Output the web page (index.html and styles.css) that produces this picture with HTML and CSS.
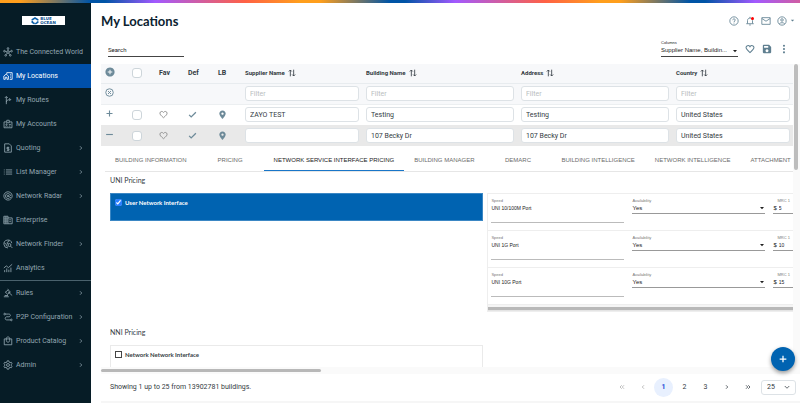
FILE: index.html
```html
<!DOCTYPE html>
<html lang="en">
<head>
    <meta charset="UTF-8">
    <meta name="viewport" content="width=device-width, initial-scale=1.0">
    <title>My Locations</title>
    <link rel="stylesheet" href="styles.css">
</head>
<body>

<!-- icons -->
<svg class="sprite" xmlns="http://www.w3.org/2000/svg">
    <symbol id="i-hub" viewBox="0 0 24 24"><g fill="none" stroke="currentColor" stroke-width="2"><circle cx="12" cy="12" r="3"/><circle cx="12" cy="3.500" r="2"/><circle cx="3.500" cy="10" r="2"/><circle cx="20.500" cy="10" r="2"/><circle cx="6.500" cy="20" r="2"/><circle cx="17.500" cy="20" r="2"/><path d="M12 5.500V9M5.500 10.500l3.500 1M18.500 10.500l-3.500 1M8 18l2.300-3.500M16 18l-2.300-3.500"/></g></symbol>
    <symbol id="i-home" viewBox="0 0 24 24"><g fill="none" stroke="currentColor" stroke-width="2"><path d="M2 20V12l5.500-4.500L13 12v8H9.500v-5h-4v5z"/><path d="M9 7V4h13v16h-6"/><path d="M17 8h2M17 12h2M17 16h2"/></g></symbol>
    <symbol id="i-route" viewBox="0 0 24 24"><path fill="none" stroke="currentColor" stroke-width="2" d="M8 22V4M4.500 7L8 3.500 11.500 7M8 17c0-4 3-6 10-6M15 7.500l3.500 3.500-3.500 3.500"/></symbol>
    <symbol id="i-badge" viewBox="0 0 24 24"><g fill="none" stroke="currentColor" stroke-width="2"><path d="M9 7H2.500v14h19V7H15"/><path d="M9 3h6v6H9z"/><circle cx="8.500" cy="13" r="1.500"/><path d="M5.500 18c0-2 6-2 6 0M14 13h5M14 17h4"/></g></symbol>
    <symbol id="i-quote" viewBox="0 0 24 24"><g fill="none" stroke="currentColor" stroke-width="2"><path d="M4 2h11l5 5v15H4z"/><path d="M15 10.500H9.500v3.500h5v3.500H9M12 9v10"/></g></symbol>
    <symbol id="i-list" viewBox="0 0 24 24"><path fill="none" stroke="currentColor" stroke-width="2" d="M2 7h2M2 12h2M2 17h2M7 7h15M7 12h15M7 17h15"/></symbol>
    <symbol id="i-radar" viewBox="0 0 24 24"><g fill="none" stroke="currentColor" stroke-width="2"><path d="M19 19A10 10 0 1 1 22 12c0 2-.8 4-2 5.500L13 12"/><path d="M15.500 17A6 6 0 1 1 18 12"/><circle cx="12" cy="12" r="2"/></g></symbol>
    <symbol id="i-building" viewBox="0 0 24 24"><path fill="none" stroke="currentColor" stroke-width="2" d="M2 3h10v18H2zM12 7h10v14H12M2 7.500h10M2 12h10M2 16.500h10M7 3v18M15 11.500h4M15 16h4"/></symbol>
    <symbol id="i-finder" viewBox="0 0 24 24"><g fill="none" stroke="currentColor" stroke-width="2"><path d="M21 10A9.500 9.500 0 1 0 12 21.500"/><path d="M3 9l5 4v3l3 2M14 3v3l-4 2v3h3"/><circle cx="15.500" cy="14.500" r="3.500"/><path d="M18 17l4.500 4.500"/></g></symbol>
    <symbol id="i-chart" viewBox="0 0 24 24"><path fill="none" stroke="currentColor" stroke-width="2" d="M4 22v-5M9 22v-9M14 22v-6M19 22V11M2 12l6-5 5 4 9-8"/></symbol>
    <symbol id="i-gavel" viewBox="0 0 24 24"><path fill="none" stroke="currentColor" stroke-width="2" d="M2 21h12M4 18h8M11 3l7 7M5 9l7 7M13 4L6 10M17 9l-5 6M12 9l10 9"/></symbol>
    <symbol id="i-path" viewBox="0 0 24 24"><g fill="none" stroke="currentColor" stroke-width="2"><circle cx="4" cy="5" r="2"/><circle cx="20" cy="19" r="2"/><path d="M6 5h8c5 0 5 6 0 6.500H9c-5 .5-5 7.500 0 7.500h9"/></g></symbol>
    <symbol id="i-bag" viewBox="0 0 24 24"><path fill="none" stroke="currentColor" stroke-width="2" d="M3 7h18v14H3zM8 11V6c0-5 8-5 8 0v5M8 11c0 5 8 5 8 0"/></symbol>
    <symbol id="i-gear" viewBox="0 0 24 24"><g fill="none" stroke="currentColor" stroke-width="2"><path d="M10 2h4l.6 3 2.400 1.400 2.900-1 2 3.400-2.300 2v2.400l2.300 2-2 3.400-2.900-1L14.600 19l-.6 3h-4l-.6-3L7 17.600l-2.900 1-2-3.400 2.300-2v-2.400l-2.300-2 2-3.400 2.900 1L9.400 5z"/><circle cx="12" cy="12" r="3.500"/></g></symbol>
    <symbol id="i-right" viewBox="0 0 24 24"><path fill="none" stroke="currentColor" stroke-width="3" d="M8 5l7 7-7 7"/></symbol>
    <symbol id="i-left" viewBox="0 0 24 24"><path fill="none" stroke="currentColor" stroke-width="3" d="M16 5l-7 7 7 7"/></symbol>
    <symbol id="i-right2" viewBox="0 0 24 24"><path fill="none" stroke="currentColor" stroke-width="3" d="M4 5l7 7-7 7M13 5l7 7-7 7"/></symbol>
    <symbol id="i-left2" viewBox="0 0 24 24"><path fill="none" stroke="currentColor" stroke-width="3" d="M11 5l-7 7 7 7M20 5l-7 7 7 7"/></symbol>
    <symbol id="i-help" viewBox="0 0 24 24"><g fill="none" stroke="currentColor" stroke-width="2"><circle cx="12" cy="12" r="10"/><path d="M9 10c0-4 6-4 6-.5 0 2.500-3 2.500-3 5M12 16v2"/></g></symbol>
    <symbol id="i-bell" viewBox="0 0 24 24"><path fill="none" stroke="currentColor" stroke-width="2" d="M3 18.500h18M6 18V11c0-8 12-8 12 0v7M12 5V2M10 21.500h4"/></symbol>
    <symbol id="i-mail" viewBox="0 0 24 24"><path fill="none" stroke="currentColor" stroke-width="2" d="M2 4h20v16H2zM2 6l10 6.500L22 6"/></symbol>
    <symbol id="i-user" viewBox="0 0 24 24"><g fill="none" stroke="currentColor" stroke-width="2"><circle cx="12" cy="12" r="10"/><circle cx="12" cy="9.500" r="3"/><path d="M5.500 19c3-4 10-4 13 0"/></g></symbol>
    <symbol id="i-caret" viewBox="0 0 24 24"><path fill="currentColor" d="M4 8h16l-8 9z"/></symbol>
    <symbol id="i-heart" viewBox="0 0 24 24"><path fill="none" stroke="currentColor" stroke-width="2.500" d="M12 20.500C5 14.500 2.500 12 2.500 8.500c0-5 6.500-6.500 9.500-2 3-4.500 9.500-3 9.500 2 0 3.500-2.500 6-9.500 12z"/></symbol>
    <symbol id="i-save" viewBox="0 0 24 24"><path fill="currentColor" fill-rule="evenodd" d="M4 2h13l5 5v13a2 2 0 0 1-2 2H4a2 2 0 0 1-2-2V4a2 2 0 0 1 2-2zM5 5v4h10V5zM12 12.500a3.500 3.500 0 1 0 .01 0z"/></symbol>
    <symbol id="i-dots" viewBox="0 0 24 24"><g fill="currentColor"><circle cx="12" cy="4" r="2.500"/><circle cx="12" cy="12" r="2.500"/><circle cx="12" cy="20" r="2.500"/></g></symbol>
    <symbol id="i-addcircle" viewBox="0 0 24 24"><path fill="currentColor" fill-rule="evenodd" d="M12 1a11 11 0 1 0 .01 0zM10.800 6.500h2.400v4.300h4.300v2.400h-4.300v4.300h-2.400v-4.300H6.500v-2.400h4.300z"/></symbol>
    <symbol id="i-clear" viewBox="0 0 24 24"><g fill="none" stroke="currentColor" stroke-width="2.500"><circle cx="12" cy="12" r="10"/><path d="M8 8l8 8M16 8l-8 8"/></g></symbol>
    <symbol id="i-plus" viewBox="0 0 24 24"><path fill="none" stroke="currentColor" stroke-width="3" d="M12 4v16M4 12h16"/></symbol>
    <symbol id="i-minus" viewBox="0 0 24 24"><path fill="none" stroke="currentColor" stroke-width="3" d="M3 12h18"/></symbol>
    <symbol id="i-check" viewBox="0 0 24 24"><path fill="none" stroke="currentColor" stroke-width="3.500" d="M3 13l5.500 5.500L21 6"/></symbol>
    <symbol id="i-pin" viewBox="0 0 24 24"><path fill="currentColor" fill-rule="evenodd" d="M12 1c-5 0-8.500 3.700-8.500 8.500C3.500 15 12 24 12 24s8.500-9 8.500-14.500C20.500 4.700 17 1 12 1zm0 5.500a3 3 0 1 1-.01 0z"/></symbol>
    <symbol id="i-sort" viewBox="0 0 24 24"><path fill="none" stroke="currentColor" stroke-width="2.500" d="M7 22V3M2.500 7.500L7 3l4.500 4.500M17 2v19M12.500 16.500L17 21l4.500-4.500"/></symbol>
    <symbol id="i-down" viewBox="0 0 24 24"><path fill="none" stroke="currentColor" stroke-width="3" d="M3 8l9 9 9-9"/></symbol>
</svg>

<div class="rainbow"></div>

<div class="app">
    <aside class="sidebar">
        <div class="logo">
            <svg viewBox="0 0 24 24"><path fill="none" stroke="#0a5ea8" stroke-width="5" stroke-dasharray="12 2" d="M12 3l8 5v8l-8 5-8-5V8z"/></svg>
            <span>BLUE<br>OCEAN</span>
        </div>
        <nav>
            <a href="#"><svg><use href="#i-hub"/></svg>The Connected World</a>
            <a href="#" class="active"><svg><use href="#i-home"/></svg>My Locations</a>
            <a href="#"><svg><use href="#i-route"/></svg>My Routes</a>
            <a href="#"><svg><use href="#i-badge"/></svg>My Accounts</a>
            <a href="#"><svg><use href="#i-quote"/></svg>Quoting<svg class="more"><use href="#i-right"/></svg></a>
            <a href="#"><svg><use href="#i-list"/></svg>List Manager<svg class="more"><use href="#i-right"/></svg></a>
            <a href="#"><svg><use href="#i-radar"/></svg>Network Radar<svg class="more"><use href="#i-right"/></svg></a>
            <a href="#"><svg><use href="#i-building"/></svg>Enterprise</a>
            <a href="#"><svg><use href="#i-finder"/></svg>Network Finder<svg class="more"><use href="#i-right"/></svg></a>
            <a href="#"><svg><use href="#i-chart"/></svg>Analytics</a>
            <hr>
            <a href="#"><svg><use href="#i-gavel"/></svg>Rules<svg class="more"><use href="#i-right"/></svg></a>
            <a href="#"><svg><use href="#i-path"/></svg>P2P Configuration<svg class="more"><use href="#i-right"/></svg></a>
            <a href="#"><svg><use href="#i-bag"/></svg>Product Catalog<svg class="more"><use href="#i-right"/></svg></a>
            <a href="#"><svg><use href="#i-gear"/></svg>Admin<svg class="more"><use href="#i-right"/></svg></a>
        </nav>
    </aside>

    <main>
        <header>
            <h1>My Locations</h1>
            <div class="header-icons">
                <button aria-label="Help"><svg><use href="#i-help"/></svg></button>
                <button aria-label="Notifications" class="bell"><svg><use href="#i-bell"/></svg></button>
                <button aria-label="Messages"><svg><use href="#i-mail"/></svg></button>
                <button aria-label="Account" class="account"><svg><use href="#i-user"/></svg><svg class="caret"><use href="#i-caret"/></svg></button>
            </div>
        </header>

        <div class="toolbar">
            <input type="text" class="search" placeholder="Search" aria-label="Search">
            <div class="toolbar-right">
                <div class="columns">
                    <label for="columns">Columns</label>
                    <div class="select-wrap">
                        <select id="columns"><option>Supplier Name, Buildin...</option></select>
                        <svg><use href="#i-caret"/></svg>
                    </div>
                </div>
                <button aria-label="Favorites"><svg><use href="#i-heart"/></svg></button>
                <button aria-label="Save"><svg><use href="#i-save"/></svg></button>
                <button aria-label="More"><svg><use href="#i-dots"/></svg></button>
            </div>
        </div>

        <div class="grid-area">
            <div class="grid-body">
                <table>
                    <colgroup>
                        <col class="c-icon"><col class="c-icon"><col class="c-fav"><col class="c-def"><col class="c-icon"><col class="c-side"><col><col><col class="c-side">
                    </colgroup>
                    <thead>
                        <tr>
                            <th><button aria-label="Expand all"><svg><use href="#i-addcircle"/></svg></button></th>
                            <th><input type="checkbox" aria-label="Select all"></th>
                            <th>Fav</th>
                            <th>Def</th>
                            <th>LB</th>
                            <th class="sortable">Supplier Name<svg><use href="#i-sort"/></svg></th>
                            <th class="sortable">Building Name<svg><use href="#i-sort"/></svg></th>
                            <th class="sortable">Address<svg><use href="#i-sort"/></svg></th>
                            <th class="sortable">Country<svg><use href="#i-sort"/></svg></th>
                        </tr>
                        <tr class="filters">
                            <td><button aria-label="Clear filters"><svg><use href="#i-clear"/></svg></button></td>
                            <td></td>
                            <td></td>
                            <td></td>
                            <td></td>
                            <td><input type="text" placeholder="Filter" aria-label="Filter supplier name"></td>
                            <td><input type="text" placeholder="Filter" aria-label="Filter building name"></td>
                            <td><input type="text" placeholder="Filter" aria-label="Filter address"></td>
                            <td><input type="text" placeholder="Filter" aria-label="Filter country"></td>
                        </tr>
                    </thead>
                    <tbody>
                        <tr>
                            <td><button aria-label="Expand"><svg><use href="#i-plus"/></svg></button></td>
                            <td><input type="checkbox" aria-label="Select row"></td>
                            <td><svg class="fav"><use href="#i-heart"/></svg></td>
                            <td><svg><use href="#i-check"/></svg></td>
                            <td><svg><use href="#i-pin"/></svg></td>
                            <td><input type="text" value="ZAYO TEST" aria-label="Supplier name"></td>
                            <td><input type="text" value="Testing" aria-label="Building name"></td>
                            <td><input type="text" value="Testing" aria-label="Address"></td>
                            <td><input type="text" value="United States" aria-label="Country"></td>
                        </tr>
                        <tr class="open">
                            <td><button aria-label="Collapse"><svg><use href="#i-minus"/></svg></button></td>
                            <td><input type="checkbox" aria-label="Select row"></td>
                            <td><svg class="fav"><use href="#i-heart"/></svg></td>
                            <td><svg><use href="#i-check"/></svg></td>
                            <td><svg><use href="#i-pin"/></svg></td>
                            <td><input type="text" value="" aria-label="Supplier name"></td>
                            <td><input type="text" value="107 Becky Dr" aria-label="Building name"></td>
                            <td><input type="text" value="107 Becky Dr" aria-label="Address"></td>
                            <td><input type="text" value="United States" aria-label="Country"></td>
                        </tr>
                    </tbody>
                </table>

                <section class="detail">
                    <div class="tabs">
                        <button>BUILDING INFORMATION</button>
                        <button>PRICING</button>
                        <button class="active">NETWORK SERVICE INTERFACE PRICING</button>
                        <button>BUILDING MANAGER</button>
                        <button>DEMARC</button>
                        <button>BUILDING INTELLIGENCE</button>
                        <button>NETWORK INTELLIGENCE</button>
                        <button>ATTACHMENT</button>
                    </div>

                    <h2>UNI Pricing</h2>
                    <div class="pricing uni">
                        <label class="interface selected"><input type="checkbox" checked>User Network Interface</label>
                        <div class="ports">
                            <div class="port">
                                <div class="field speed"><label for="speed1">Speed</label><input type="text" id="speed1" value="UNI 10/100M Port"></div>
                                <div class="field"><label for="av1">Availability</label><div class="select-wrap"><select id="av1"><option>Yes</option></select><svg><use href="#i-caret"/></svg></div></div>
                                <div class="field mrc"><label for="mrc1">MRC 1</label><div class="money">$<input type="text" id="mrc1" value="5"></div></div>
                            </div>
                            <div class="port">
                                <div class="field speed"><label for="speed2">Speed</label><input type="text" id="speed2" value="UNI 1G Port"></div>
                                <div class="field"><label for="av2">Availability</label><div class="select-wrap"><select id="av2"><option>Yes</option></select><svg><use href="#i-caret"/></svg></div></div>
                                <div class="field mrc"><label for="mrc2">MRC 1</label><div class="money">$<input type="text" id="mrc2" value="10"></div></div>
                            </div>
                            <div class="port">
                                <div class="field speed"><label for="speed3">Speed</label><input type="text" id="speed3" value="UNI 10G Port"></div>
                                <div class="field"><label for="av3">Availability</label><div class="select-wrap"><select id="av3"><option>Yes</option></select><svg><use href="#i-caret"/></svg></div></div>
                                <div class="field mrc"><label for="mrc3">MRC 1</label><div class="money">$<input type="text" id="mrc3" value="15"></div></div>
                            </div>
                            <div class="ports-scroll"></div>
                        </div>
                    </div>

                    <h2>NNI Pricing</h2>
                    <div class="pricing">
                        <label class="interface"><input type="checkbox">Network Network Interface</label>
                    </div>
                </section>
            </div>
            <div class="scroll-y"></div>
            <button class="fab" aria-label="Add location"><svg><use href="#i-plus"/></svg></button>
        </div>
        <div class="scroll-x"></div>

        <footer>
            <span>Showing 1 up to 25 from 13902781 buildings.</span>
            <div class="pager">
                <button aria-label="First page" disabled><svg><use href="#i-left2"/></svg></button>
                <button aria-label="Previous page" disabled><svg><use href="#i-left"/></svg></button>
                <button class="current">1</button>
                <button>2</button>
                <button>3</button>
                <button aria-label="Next page"><svg><use href="#i-right"/></svg></button>
                <button aria-label="Last page"><svg><use href="#i-right2"/></svg></button>
                <div class="select-wrap page-size">
                    <select aria-label="Rows per page"><option>25</option></select>
                    <svg><use href="#i-down"/></svg>
                </div>
            </div>
        </footer>
    </main>
</div>

</body>
</html>
```

FILE: styles.css
```css
* {
    box-sizing: border-box;
}
body {
    margin: 0;
    height: 100vh;
    display: flex;
    flex-direction: column;
    font-family: Roboto, "Liberation Sans", sans-serif;
    font-size: 7px;
    color: #333b42;
    background-color: #fff;
    overflow: hidden;
}
button, input, select {
    font: inherit;
    color: inherit;
    margin: 0;
    padding: 0;
    border: none;
    background: none;
    outline: none;
}
button {
    cursor: pointer;
}
select {
    appearance: none;
    width: 100%;
}
svg {
    display: block;
    flex: none;
    width: 10px;
    height: 10px;
}
.sprite {
    position: absolute;
    width: 0;
    height: 0;
}
.rainbow {
    height: 3px;
    flex: none;
    background: repeating-linear-gradient(90deg, #ff9f1c 0, #ff9f1c 20px, #0054a6 90px, #0054a6 105px, #a259ff 155px, #ff6145 245px, #ff9f1c 300px);
}
.app {
    flex: 1;
    display: flex;
    min-height: 0;
}

/* sidebar */
.sidebar {
    width: 91px;
    flex: none;
    background-color: #061c26;
    color: #93a7b1;
}
.logo {
    display: flex;
    align-items: center;
    justify-content: center;
    gap: 1px;
    width: 43px;
    height: 9px;
    margin: 13px 0 15px 22px;
    background-color: #fff;
    color: #0a4f8f;
    font: bold 4px/4px "DejaVu Sans", sans-serif;
}
.logo svg {
    width: 8px;
    height: 8px;
}
.sidebar a {
    display: flex;
    align-items: center;
    gap: 3px;
    height: 24px;
    padding: 0 7px 0 3px;
    color: inherit;
    text-decoration: none;
    white-space: nowrap;
}
.sidebar a.active {
    background-color: #0050ab;
    color: #fff;
}
.sidebar .more {
    width: 6px;
    height: 6px;
    margin-left: auto;
}
.sidebar hr {
    margin: 0;
    border: none;
    border-top: 1px solid #4a626d;
}

/* header */
main {
    flex: 1;
    min-width: 0;
    display: flex;
    flex-direction: column;
}
header {
    display: flex;
    align-items: center;
    justify-content: space-between;
    height: 35px;
    padding: 0 5px 0 10px;
}
h1 {
    margin: 0;
    font: bold 13px/20px Lato, sans-serif;
    color: #0b2230;
}
.header-icons, .toolbar-right {
    display: flex;
    align-items: center;
    gap: 6px;
    color: #5f7f90;
}
.toolbar button {
    color: #5f7f90;
}
.account {
    display: flex;
    align-items: center;
    gap: 3px;
}
.caret {
    width: 5px;
    height: 5px;
}
.bell {
    position: relative;
}
.bell::after {
    content: "";
    position: absolute;
    top: 1px;
    right: 1px;
    width: 3px;
    height: 3px;
    border-radius: 50%;
    background-color: #f00;
}

/* search and column picker */
.toolbar {
    display: flex;
    justify-content: space-between;
    align-items: flex-end;
    height: 26px;
    padding: 0 11px 7px 17px;
}
.search {
    width: 76px;
    height: 13px;
    padding-bottom: 1px;
    font-size: 6px;
    border-bottom: 1px solid #444;
}
.search::placeholder {
    color: #222;
}
.toolbar-right {
    gap: 7px;
}
.columns {
    width: 77px;
    color: #222;
    border-bottom: 1px solid #444;
}
.columns label, .field label {
    display: block;
    font: 4px/5px "Liberation Sans", sans-serif;
}
.select-wrap {
    display: flex;
    align-items: center;
}
.select-wrap svg {
    width: 6px;
    height: 6px;
}
.columns select {
    height: 11px;
    padding-bottom: 1px;
    font-family: "Liberation Sans", sans-serif;
    font-size: 6px;
}

/* grid */
.grid-area {
    flex: 1;
    min-height: 0;
    display: flex;
    position: relative;
    padding-left: 10px;
}
.grid-body {
    flex: 1;
    min-width: 0;
    overflow: hidden;
}
.scroll-y {
    width: 7px;
    padding: 0 2px 0 1px;
    background-color: #fafafa;
}
.scroll-y::before {
    content: "";
    display: block;
    height: 35%;
    border-radius: 2px;
    background-color: #bdbdbd;
}
.scroll-x {
    flex: none;
    height: 7px;
    margin-left: 10px;
    padding: 2px 0;
    background-color: #fafafa;
}
.scroll-x::before {
    content: "";
    display: block;
    width: 220px;
    height: 3px;
    border-radius: 2px;
    background-color: #b8b8b8;
}
table {
    width: 100%;
    table-layout: fixed;
    border-collapse: collapse;
}
.c-icon {
    width: 27px;
}
.c-fav {
    width: 29px;
}
.c-def {
    width: 30px;
}
.c-side {
    width: 121px;
}
th, td {
    height: 21px;
    padding: 0 3px 0 4px;
    text-align: left;
    vertical-align: middle;
}
th {
    height: 19px;
    font-weight: bold;
    border-bottom: 1px solid #e8ecef;
}
thead {
    background-color: #f7f8fa;
}
.filters {
    border-bottom: 1px solid #eceff1;
}
th button svg, td svg, td button svg {
    color: #6d8a99;
}
td svg {
    width: 9px;
    height: 9px;
}
td .fav {
    color: #909090;
}
.open {
    background-color: #e9e9e9;
}
.sortable {
    font-size: 6px;
    white-space: nowrap;
}
.sortable svg {
    display: inline-block;
    width: 8px;
    height: 8px;
    margin-left: 3px;
    vertical-align: middle;
}
td input[type="text"] {
    display: block;
    width: 100%;
    height: 15px;
    padding: 0 4px;
    border: 1px solid #dde2e6;
    border-radius: 3px;
    background-color: #fff;
}
td input::placeholder {
    color: #b9bdc0;
}
th input[type="checkbox"], td input[type="checkbox"] {
    appearance: none;
    display: block;
    width: 10px;
    height: 10px;
    border: 1px solid #cdd5da;
    border-radius: 3px;
    background-color: #fff;
}

/* row detail */
.tabs {
    display: flex;
    margin-left: 4px;
    border-bottom: 1px solid #e6e6e6;
}
.tabs button {
    flex: none;
    min-width: 67px;
    height: 25px;
    padding: 3px 10px 0;
    font: 6px/8px "Liberation Sans", sans-serif;
    color: #6b6b6b;
    border-bottom: 1px solid transparent;
}
.tabs button:last-child {
    min-width: 0;
}
.tabs .active {
    color: #222;
    border-bottom-color: #1976c8;
}
h2 {
    margin: 0 0 0 9px;
    padding: 3px 0 8px;
    font: 7px/10px Lato, sans-serif;
}
.pricing {
    display: grid;
    grid-template-columns: 11fr 9fr;
    align-items: start;
    gap: 4px;
    margin-left: 9px;
}
.uni {
    margin-bottom: 12px;
}
.interface {
    display: flex;
    gap: 3px;
    height: 28px;
    padding: 5px 4px;
    font: bold 6px/8px Lato, sans-serif;
    border: 1px solid #eaeaea;
}
.interface input {
    width: 7px;
    height: 7px;
    accent-color: #2a7fff;
}
.interface input:not(:checked) {
    appearance: none;
    border: 1px solid #444;
}
.interface.selected {
    background-color: #0063b1;
    border-color: #3b87c4;
    color: #fff;
}
.ports {
    overflow: hidden;
    border: 1px solid #eee;
    border-right: none;
}
.port {
    display: flex;
    gap: 8px;
    height: 37px;
    padding: 4px 0 0 3px;
    border-bottom: 1px solid #eee;
}
.field {
    flex: none;
    width: 133px;
    font: 6px/8px "Liberation Sans", sans-serif;
    color: #222;
}
.field label {
    color: #777;
}
.field .select-wrap, .money {
    height: 11px;
    border-bottom: 1px solid #999;
}
.field select {
    height: 8px;
}
.speed input {
    display: block;
    width: 100%;
    height: 20px;
    padding-bottom: 9px;
    font-size: 5px;
    border-bottom: 1px solid #bbb;
}
.mrc label {
    margin-left: 4px;
}
.money {
    display: flex;
    align-items: center;
    gap: 2px;
}
.money input {
    width: 100px;
    font-size: 5px;
}
.ports-scroll {
    height: 6px;
    border-top: 2px solid #f5f5f5;
    border-bottom: 1px solid #e4e4e4;
    background-color: #b8b8b8;
}

.fab {
    position: absolute;
    right: 5px;
    bottom: -4px;
    width: 24px;
    height: 24px;
    padding: 7px;
    border-radius: 50%;
    background-color: #0063b1;
    color: #fff;
    box-shadow: 0 2px 4px rgba(0,0,0,0.4);
}

/* footer */
footer {
    flex: none;
    display: flex;
    align-items: center;
    justify-content: space-between;
    height: 29px;
    margin-left: 10px;
    padding: 0 4px 1px 9px;
    border-bottom: 2px solid #f6f6f6;
}
.pager {
    display: flex;
    align-items: center;
    gap: 2px;
}
.pager button {
    display: flex;
    align-items: center;
    justify-content: center;
    width: 19px;
    height: 19px;
    border-radius: 50%;
}
.pager button:disabled {
    color: #aaa;
}
.pager button svg {
    width: 6px;
    height: 6px;
}
.pager .current {
    background-color: #e8f0fe;
    color: #1d4ed8;
    font-weight: bold;
}
.page-size {
    width: 35px;
    height: 15px;
    margin-left: 2px;
    padding: 0 5px;
    border: 1px solid #dde2e6;
    border-radius: 3px;
}
```
